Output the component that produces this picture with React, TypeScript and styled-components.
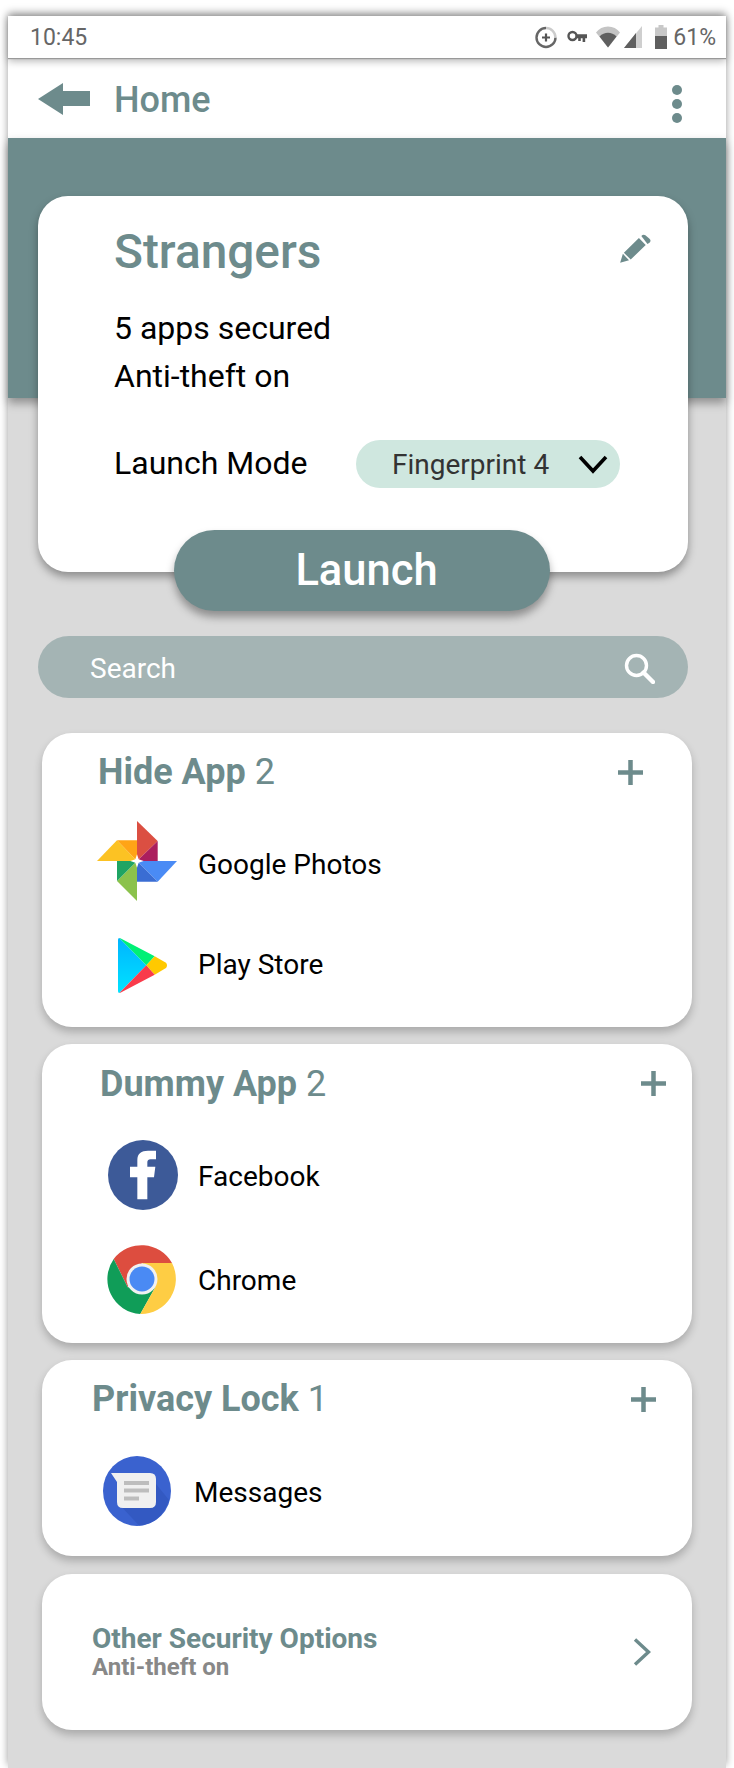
import React from 'react';
import styled, { createGlobalStyle } from 'styled-components';

const TEAL = '#6d8b8c';

const GlobalStyle = createGlobalStyle`
  html, body {
    margin: 0;
    padding: 0;
    background: #fff;
    overflow: hidden;
  }
  * { box-sizing: border-box; }
`;

const Phone = styled.div`
  width: 718px;
  height: 1752px;
  margin: 16px 8px 0;
  background: #dadada;
  box-shadow: 0 -3px 8px rgba(0, 0, 0, 0.4);
  font-family: Roboto, "Liberation Sans", sans-serif;
`;

const StatusBar = styled.div`
  position: relative;
  z-index: 2;
  height: 42px;
  padding: 0 10px 0 22px;
  display: flex;
  align-items: center;
  background: #fff;
  color: #666;
  font-size: 23px;
  box-shadow: 0 1px 1px #999, 0 3px 8px rgba(0, 0, 0, 0.3);
`;

const Clock = styled.span`
  flex: 1;
`;

const StatusIcons = styled.div`
  display: flex;
  align-items: center;
`;

const Percent = styled.span`
  margin-left: 6px;
`;

const NavBar = styled.div`
  height: 80px;
  padding: 2px 44px 0 30px;
  display: flex;
  align-items: center;
  background: #fff;
  color: ${TEAL};
`;

const NavTitle = styled.span`
  flex: 1;
  margin: 2px 0 0 24px;
  font-size: 36px;
  font-weight: 500;
`;

const Hero = styled.div`
  height: 260px;
  background: ${TEAL};
  box-shadow: 0 5px 9px rgba(0, 0, 0, 0.35);
`;

const MainCard = styled.section`
  position: relative;
  width: 650px;
  height: 376px;
  margin: -202px 0 0 30px;
  padding: 29px 37px 0 76px;
  background: #fff;
  border-radius: 30px;
  box-shadow: 0 5px 8px rgba(0, 0, 0, 0.35);
`;

const ProfileHeader = styled.div`
  display: flex;
  justify-content: space-between;
  align-items: flex-start;
`;

const ProfileName = styled.h1`
  margin: 0;
  font-size: 47.8px;
  line-height: 54px;
  font-weight: 500;
  color: ${TEAL};
`;

const Facts = styled.div`
  margin-top: 26px;
  font-size: 32px;
  line-height: 47.5px;
  color: #000;
`;

const ModeRow = styled.div`
  display: flex;
  align-items: center;
  margin-top: 40px;
  font-size: 32px;
  color: #000;
`;

const ModeLabel = styled.span`
  width: 242px;
  padding-bottom: 2px;
`;

const ModePill = styled.div`
  width: 264px;
  height: 48px;
  padding: 0 12px 0 36px;
  display: flex;
  align-items: center;
  justify-content: space-between;
  border-radius: 24px;
  background: #cfe7df;
  color: #333;
  font-size: 28px;
`;

const LaunchButton = styled.button`
  position: relative;
  display: block;
  width: 376px;
  height: 81px;
  margin: -42px 0 0 166px;
  padding: 0 0 1px 9px;
  border: 0;
  border-radius: 41px;
  background: ${TEAL};
  color: #fff;
  font-family: inherit;
  font-size: 43.5px;
  font-weight: 500;
  box-shadow: 0 6px 9px rgba(0, 0, 0, 0.35);
`;

const SearchBar = styled.div`
  width: 650px;
  height: 62px;
  margin: 25px 0 0 30px;
  padding: 2px 33px 0 52px;
  display: flex;
  align-items: center;
  justify-content: space-between;
  border-radius: 31px;
  background: #a4b4b4;
  color: #fff;
  font-size: 28px;
`;

const Sections = styled.div`
  width: 650px;
  margin: 35px 0 0 34px;
  display: flex;
  flex-direction: column;
  gap: 17px;
`;

const AppCard = styled.section<{ $bottom: number }>`
  padding-bottom: ${(p) => p.$bottom}px;
  background: #fff;
  border-radius: 30px;
  box-shadow: 0 5px 9px rgba(0, 0, 0, 0.22);
`;

const CardHeader = styled.div<{ $height: number; $left: number; $right: number; $below: number }>`
  height: ${(p) => p.$height}px;
  margin-bottom: ${(p) => p.$below}px;
  padding: 0 ${(p) => p.$right}px 0 ${(p) => p.$left}px;
  display: flex;
  align-items: center;
  justify-content: space-between;
  color: ${TEAL};
`;

const CardTitle = styled.h2`
  margin: 0;
  font-size: 36px;
  font-weight: 700;
`;

const Count = styled.span`
  font-weight: 400;
`;

const AppRow = styled.div<{ $height: number; $iconX: number }>`
  height: ${(p) => p.$height}px;
  padding-left: ${(p) => p.$iconX}px;
  display: flex;
  align-items: center;
`;

const IconSlot = styled.div<{ $width: number; $shift?: number }>`
  width: ${(p) => p.$width}px;
  flex: none;
  display: flex;
  align-items: center;
  margin-top: ${(p) => p.$shift ?? 0}px;
`;

const AppName = styled.span<{ $drop?: number }>`
  padding-top: ${(p) => p.$drop ?? 2}px;
  font-size: 28px;
  color: #000;
`;

const OptionsCard = styled.section`
  height: 156px;
  margin-top: 1px;
  padding: 0 41px 0 50px;
  display: flex;
  align-items: center;
  justify-content: space-between;
  background: #fff;
  border-radius: 30px;
  box-shadow: 0 5px 9px rgba(0, 0, 0, 0.22);
`;

const OptionsTitle = styled.div`
  font-size: 28px;
  line-height: 30px;
  font-weight: 700;
  color: ${TEAL};
`;

const OptionsSub = styled.div`
  font-size: 24px;
  line-height: 27px;
  font-weight: 700;
  color: #888;
`;

const TimerIcon = () => (
  <svg width="22" height="24" viewBox="0 0 22 24">
    <path d="M11 3a9.500 9.500 0 1 0 9.500 9.500" fill="none" stroke="#666" strokeWidth="2.400" />
    <path d="M11 3a9.500 9.500 0 0 1 9.500 9.500" fill="none" stroke="#ccc" strokeWidth="2.400" />
    <path d="M11 8.500v8M7 12.500h8" stroke="#555" strokeWidth="2.200" />
  </svg>
);

const KeyIcon = () => (
  <svg width="20" height="14" viewBox="0 0 20 14" style={{ marginLeft: '10px' }}>
    <circle cx="5.500" cy="6" r="4" fill="none" stroke="#555" strokeWidth="2.400" />
    <path d="M9 4.200H20v4h-1.800V12h-2.600V8.200h-1.800V11h-2.600V8.200H9z" fill="#555" />
  </svg>
);

const WifiIcon = () => (
  <svg width="24" height="22" viewBox="0 0 24 22" style={{ marginLeft: '9px' }}>
    <path d="M0 6.500C3 2.500 7 0.500 12 0.500s9 2 12 6L12 21.500z" fill="#c4c4c4" />
    <path d="M3.500 10.500C6 8 8.800 6.800 12 6.800s6 1.200 8.500 3.700L12 21.500z" fill="#5f5f5f" />
  </svg>
);

const SignalIcon = () => (
  <svg width="18" height="22" viewBox="0 0 18 22" style={{ marginLeft: '4px' }}>
    <path d="M18 0v22H0z" fill="#cfcfcf" />
    <path d="M12 7v15H0z" fill="#5f5f5f" />
  </svg>
);

const BatteryIcon = () => (
  <svg width="12" height="24" viewBox="0 0 12 24" style={{ marginLeft: '13px' }}>
    <path d="M3.500 0h5v2.500H12V24H0V2.500h3.500z" fill="#c8c8c8" />
    <path d="M0 11h12v13H0z" fill="#5f5f5f" />
  </svg>
);

const BackArrow = () => (
  <svg width="52" height="32" viewBox="0 0 52 32">
    <path d="M0 16L25 0v8h27v15H25v9z" fill={TEAL} />
  </svg>
);

const MoreDots = () => (
  <svg width="10" height="38" viewBox="0 0 10 38" style={{ marginTop: '9px' }}>
    <circle cx="5" cy="5" r="5" fill={TEAL} />
    <circle cx="5" cy="19" r="5" fill={TEAL} />
    <circle cx="5" cy="33" r="5" fill={TEAL} />
  </svg>
);

const PencilIcon = () => (
  <svg width="31" height="29" viewBox="0 0 90 85" style={{ marginTop: '9px' }}>
    <path d="M0 84l8-26 18 19zM11 55L55 12l20 20-44 43z" fill={TEAL} />
    <path d="M62 6q6-6 12-2l12 10q6 6 0 12l-6 3z" fill={TEAL} />
  </svg>
);

const ChevronDown = () => (
  <svg width="30" height="20" viewBox="0 0 30 20">
    <path d="M2 3l13 14L28 3" fill="none" stroke="#000" strokeWidth="3.600" />
  </svg>
);

const SearchIcon = () => (
  <svg width="31" height="31" viewBox="0 0 31 31">
    <circle cx="12.500" cy="12.500" r="10" fill="none" stroke="#fff" strokeWidth="3.400" />
    <path d="M19.500 19.500L29 29" stroke="#fff" strokeWidth="4.400" strokeLinecap="round" />
  </svg>
);

const PlusIcon = () => (
  <svg width="25" height="25" viewBox="0 0 25 25">
    <path d="M12.500 0v25M0 12.500h25" stroke={TEAL} strokeWidth="4.500" />
  </svg>
);

const ChevronRight = () => (
  <svg width="18" height="28" viewBox="0 0 18 28">
    <path d="M2 1.500L15.500 14 2 26.500" fill="none" stroke={TEAL} strokeWidth="3.400" />
  </svg>
);

const PhotosIcon = () => (
  <svg width="80" height="80" viewBox="0 0 240 240">
    <path d="M120 0l62 60-62 60z" fill="#db4f42" />
    <path d="M182 60v60h-62z" fill="#ab1e5e" />
    <path d="M120 120h120l-58 62z" fill="#4a8bf5" />
    <path d="M120 120l62 62h-62z" fill="#3a6dd3" />
    <path d="M120 120v120L60 180z" fill="#8bc24c" />
    <path d="M60 120h60l-60 60z" fill="#1fa463" />
    <path d="M120 120H0l60-62z" fill="#fcc223" />
    <path d="M60 58h60v62z" fill="#ffa416" />
    <path d="M120 100l5 15 15 5-15 5-5 15-5-15-15-5 15-5z" fill="#fff" />
  </svg>
);

const PlayIcon = () => (
  <svg width="50" height="55" viewBox="0 0 150 165">
    <defs>
      <linearGradient id="playBlue" x1="0" y1="0" x2="0" y2="1">
        <stop offset="0" stopColor="#00b4ff" />
        <stop offset="1" stopColor="#00e3ff" />
      </linearGradient>
    </defs>
    <path d="M0 6q0-6 4-6l81 82-81 83q-4 0-4-6z" fill="url(#playBlue)" />
    <path d="M4 0q3 0 6 2l100 53-25 27z" fill="#00f076" />
    <path d="M110 55l34 19q6 8 0 16l-34 20-25-28z" fill="#ffc900" />
    <path d="M4 165q3 0 6-2l100-53-25-28z" fill="#f93b4b" />
  </svg>
);

const FacebookIcon = () => (
  <svg width="70" height="70" viewBox="0 0 210 210">
    <circle cx="105" cy="105" r="105" fill="#3d5a98" />
    <path
      d="M88 178v-66H66V80h22V60c0-20 12-28 32-28h24v26h-16c-8 0-10 4-10 10v12h24l-4 32h-20v66z"
      fill="#fff"
    />
  </svg>
);

const ChromeIcon = () => (
  <svg width="70" height="70" viewBox="0 0 70 70">
    <path d="M35 19h30A35 35 0 0 0 6.700 15l14 28.300z" fill="#dd4d3f" />
    <path d="M6.700 15A35 35 0 0 0 33.300 70L48.300 43.300H20.700z" fill="#109d58" />
    <path d="M33.300 70A35 35 0 0 0 65 19H35l13.300 24.300z" fill="#fecd44" />
    <circle cx="35" cy="35" r="15.500" fill="#f1f1f1" />
    <circle cx="35" cy="35" r="12.500" fill="#4a8af4" />
  </svg>
);

const MessagesIcon = () => (
  <svg width="68" height="70" viewBox="0 0 68 70">
    <ellipse cx="34" cy="35" rx="34" ry="35" fill="#3a62cf" />
    <path d="M14 46l22 23.500Q58 68 66 44L53 28z" fill="#3359c2" />
    <path d="M8 17h39q6 0 6 6v23q0 6-6 6H20q-6 0-6-6V26z" fill="#f0f0f0" />
    <path d="M21 25h25v4H21zM21 32.500h25v4H21zM21 40.500h15v4H21z" fill="#bdbdbd" />
  </svg>
);

const App: React.FC = () => (
  <>
    <GlobalStyle />
    <Phone>
      <StatusBar>
        <Clock>10:45</Clock>
        <StatusIcons>
          <TimerIcon />
          <KeyIcon />
          <WifiIcon />
          <SignalIcon />
          <BatteryIcon />
          <Percent>61%</Percent>
        </StatusIcons>
      </StatusBar>
      <NavBar>
        <BackArrow />
        <NavTitle>Home</NavTitle>
        <MoreDots />
      </NavBar>
      <Hero />
      <MainCard>
        <ProfileHeader>
          <ProfileName>Strangers</ProfileName>
          <PencilIcon />
        </ProfileHeader>
        <Facts>
          <div>5 apps secured</div>
          <div>Anti-theft on</div>
        </Facts>
        <ModeRow>
          <ModeLabel>Launch Mode</ModeLabel>
          <ModePill>
            <span>Fingerprint 4</span>
            <ChevronDown />
          </ModePill>
        </ModeRow>
      </MainCard>
      <LaunchButton>Launch</LaunchButton>
      <SearchBar>
        <span>Search</span>
        <SearchIcon />
      </SearchBar>
      <Sections>
        <AppCard $bottom={15}>
          <CardHeader $height={78} $left={56} $right={49} $below={3}>
            <CardTitle>
              Hide App <Count>2</Count>
            </CardTitle>
            <PlusIcon />
          </CardHeader>
          <AppRow $height={99} $iconX={55}>
            <IconSlot $width={101} $shift={-5}>
              <PhotosIcon />
            </IconSlot>
            <AppName>Google Photos</AppName>
          </AppRow>
          <AppRow $height={99} $iconX={76}>
            <IconSlot $width={80} $shift={6}>
              <PlayIcon />
            </IconSlot>
            <AppName $drop={4}>Play Store</AppName>
          </AppRow>
        </AppCard>
        <AppCard $bottom={12}>
          <CardHeader $height={79} $left={58} $right={26} $below={0}>
            <CardTitle>
              Dummy App <Count>2</Count>
            </CardTitle>
            <PlusIcon />
          </CardHeader>
          <AppRow $height={104} $iconX={66}>
            <IconSlot $width={90}>
              <FacebookIcon />
            </IconSlot>
            <AppName>Facebook</AppName>
          </AppRow>
          <AppRow $height={104} $iconX={65}>
            <IconSlot $width={91}>
              <ChromeIcon />
            </IconSlot>
            <AppName>Chrome</AppName>
          </AppRow>
        </AppCard>
        <AppCard $bottom={24}>
          <CardHeader $height={78} $left={50} $right={36} $below={13}>
            <CardTitle>
              Privacy Lock <Count>1</Count>
            </CardTitle>
            <PlusIcon />
          </CardHeader>
          <AppRow $height={81} $iconX={61}>
            <IconSlot $width={91} $shift={-2}>
              <MessagesIcon />
            </IconSlot>
            <AppName>Messages</AppName>
          </AppRow>
        </AppCard>
        <OptionsCard>
          <div>
            <OptionsTitle>Other Security Options</OptionsTitle>
            <OptionsSub>Anti-theft on</OptionsSub>
          </div>
          <ChevronRight />
        </OptionsCard>
      </Sections>
    </Phone>
  </>
);

export default App;
